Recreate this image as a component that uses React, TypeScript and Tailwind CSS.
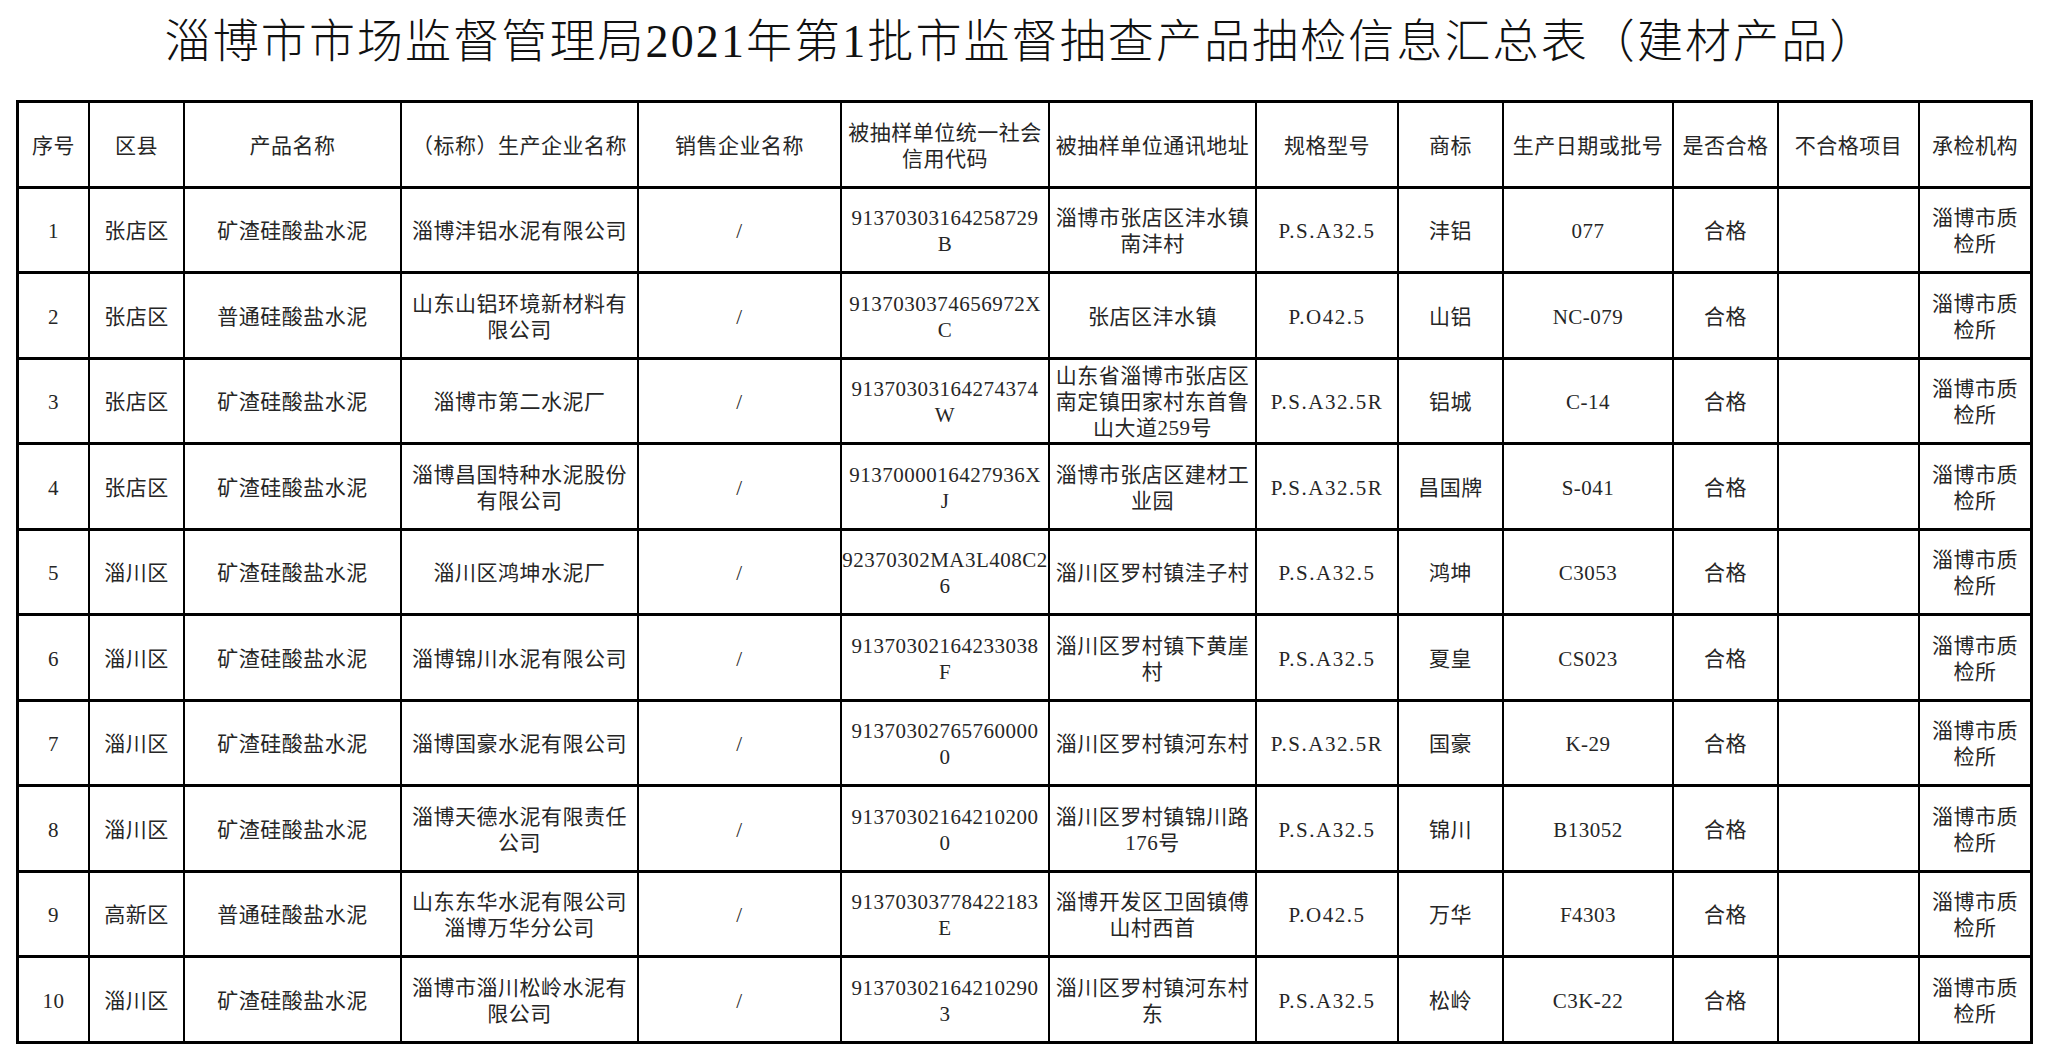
type Cell = string | string[];

const headers: Cell[] = [
  "序号",
  "区县",
  "产品名称",
  "（标称）生产企业名称",
  "销售企业名称",
  ["被抽样单位统一社会", "信用代码"],
  "被抽样单位通讯地址",
  "规格型号",
  "商标",
  "生产日期或批号",
  "是否合格",
  "不合格项目",
  "承检机构",
];

const rows: Cell[][] = [
  ["1", "张店区", "矿渣硅酸盐水泥", "淄博沣铝水泥有限公司", "/", ["91370303164258729", "B"], ["淄博市张店区沣水镇", "南沣村"], "P.S.A32.5", "沣铝", "077"],
  ["2", "张店区", "普通硅酸盐水泥", ["山东山铝环境新材料有", "限公司"], "/", ["9137030374656972X", "C"], "张店区沣水镇", "P.O42.5", "山铝", "NC-079"],
  ["3", "张店区", "矿渣硅酸盐水泥", "淄博市第二水泥厂", "/", ["91370303164274374", "W"], ["山东省淄博市张店区", "南定镇田家村东首鲁", "山大道259号"], "P.S.A32.5R", "铝城", "C-14"],
  ["4", "张店区", "矿渣硅酸盐水泥", ["淄博昌国特种水泥股份", "有限公司"], "/", ["9137000016427936X", "J"], ["淄博市张店区建材工", "业园"], "P.S.A32.5R", "昌国牌", "S-041"],
  ["5", "淄川区", "矿渣硅酸盐水泥", "淄川区鸿坤水泥厂", "/", ["92370302MA3L408C2", "6"], "淄川区罗村镇洼子村", "P.S.A32.5", "鸿坤", "C3053"],
  ["6", "淄川区", "矿渣硅酸盐水泥", "淄博锦川水泥有限公司", "/", ["91370302164233038", "F"], ["淄川区罗村镇下黄崖", "村"], "P.S.A32.5", "夏皇", "CS023"],
  ["7", "淄川区", "矿渣硅酸盐水泥", "淄博国豪水泥有限公司", "/", ["91370302765760000", "0"], "淄川区罗村镇河东村", "P.S.A32.5R", "国豪", "K-29"],
  ["8", "淄川区", "矿渣硅酸盐水泥", ["淄博天德水泥有限责任", "公司"], "/", ["91370302164210200", "0"], ["淄川区罗村镇锦川路", "176号"], "P.S.A32.5", "锦川", "B13052"],
  ["9", "高新区", "普通硅酸盐水泥", ["山东东华水泥有限公司", "淄博万华分公司"], "/", ["91370303778422183", "E"], ["淄博开发区卫固镇傅", "山村西首"], "P.O42.5", "万华", "F4303"],
  ["10", "淄川区", "矿渣硅酸盐水泥", ["淄博市淄川松岭水泥有", "限公司"], "/", ["91370302164210290", "3"], ["淄川区罗村镇河东村", "东"], "P.S.A32.5", "松岭", "C3K-22"],
].map((r) => [...r, "合格", "", ["淄博市质", "检所"]]);

function TableCell({ value, wide }: { value: Cell; wide?: boolean }) {
  const lines = Array.isArray(value) ? value : [value];
  return (
    <div
      className={`flex flex-col items-center justify-center bg-white pt-[3px] text-center ${
        wide ? "tracking-[1.5px]" : ""
      }`}
    >
      {lines.map((line, i) => (
        <span key={i} className="whitespace-nowrap">
          {line}
        </span>
      ))}
    </div>
  );
}

export default function App() {
  return (
    <div className="min-h-screen w-[2048px] bg-white font-['Liberation_Serif','Noto_Sans_CJK_SC',serif] text-[#262626]">
      <div className="flex h-[84px] items-center justify-center pr-[6px]">
        <h1 className="text-[46px] font-light leading-none tracking-[2.1px] text-[#111]">
          淄博市市场监督管理局2021年第1批市监督抽查产品抽检信息汇总表（建材产品）
        </h1>
      </div>
      <div className="mt-[16px] ml-[16px] grid w-[2017px] auto-rows-[82.5px] grid-cols-[69px_93px_215px_235px_201px_206px_205px_140px_103px_168px_103px_139px_110px] gap-x-[2px] gap-y-[3px] border-[3px] border-black bg-black text-[21px] leading-[26px] tracking-[0.5px]">
        {headers.map((h, i) => (
          <TableCell key={`h${i}`} value={h} />
        ))}
        {rows.map((row, r) =>
          row.map((c, i) => (
            <TableCell key={`${r}-${i}`} value={c} wide={i === 7} />
          ))
        )}
      </div>
    </div>
  );
}
